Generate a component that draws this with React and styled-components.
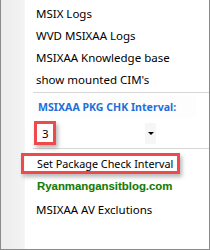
import React from "react";
import styled, { createGlobalStyle } from "styled-components";

const GlobalStyle = createGlobalStyle`
  html, body {
    margin: 0;
    padding: 0;
    background: #ffffff;
  }
`;

const Menu = styled.div`
  position: relative;
  width: 210px;
  height: 250px;
  box-sizing: border-box;
  border: 1px solid #8a8a8a;
  border-top: none;
  padding-top: 2px;
  background: linear-gradient(to right, #ececec 0px, #f3f3f3 23px, #f7f7f7 24px, #ffffff 24px);
  font-family: "Noto Sans", "Open Sans", sans-serif;
  font-size: 11.5px;
  color: #000;
`;

const Item = styled.div`
  height: ${(p) => p.h || 22}px;
  display: flex;
  align-items: center;
  padding-left: ${(p) => p.pl || 35}px;
  white-space: nowrap;
`;

const Separator = styled.div`
  height: 1px;
  margin: ${(p) => p.m || "2px 0 0 32px"};
  background: #d7d7d7;
`;

const Label = styled.div`
  height: 22px;
  margin: 3px 13px 0 32px;
  padding-left: 5px;
  display: flex;
  align-items: center;
  font-weight: 700;
  font-size: 10.6px;
  color: #1f6fd8;
  background: #fdfdfd;
  white-space: nowrap;
`;

const Combo = styled.div`
  height: 24px;
  margin: 3px 0 0 32px;
  display: flex;
  align-items: center;
`;

const Highlight = styled.div`
  box-sizing: border-box;
  border: 3px solid #ee4a4d;
  box-shadow: 2px 3px 4px rgba(0, 0, 0, 0.28);
  display: flex;
  align-items: center;
  white-space: nowrap;
`;

const ValueBox = styled(Highlight)`
  width: 22px;
  height: 24px;
  margin-left: 1px;
  padding-left: 5px;
`;

const ArrowBox = styled.div`
  width: 11px;
  height: 21px;
  margin-left: 89px;
  background: #f6f6f6;
  display: flex;
  align-items: center;
  justify-content: center;
`;

const Arrow = styled.div`
  width: 0;
  height: 0;
  border-left: 3px solid transparent;
  border-right: 3px solid transparent;
  border-top: 3px solid #000;
`;

const ActionBox = styled(Highlight)`
  width: 159px;
  height: 21px;
  margin: 4px 0 0 20px;
  padding-left: 13px;
  font-size: 10.8px;
`;

const Brand = styled(Item)`
  font-family: "Liberation Sans", Arial, sans-serif;
  font-weight: 700;
  font-size: 11.4px;
  color: #0f7a12;
  text-shadow: 0 0 1px rgba(200, 200, 0, 0.35);
  padding-left: 36px;
  height: 23px;
`;

export default function App() {
  return (
    <>
      <GlobalStyle />
      <Menu>
        <Item>MSIX Logs</Item>
        <Item>WVD MSIXAA Logs</Item>
        <Item>MSIXAA Knowledge base</Item>
        <Item>show mounted CIM's</Item>
        <Separator />
        <Label>MSIXAA PKG CHK Interval:</Label>
        <Combo>
          <ValueBox>3</ValueBox>
          <ArrowBox>
            <Arrow />
          </ArrowBox>
        </Combo>
        <Separator m="3px 0 0 32px" />
        <ActionBox>Set Package Check Interval</ActionBox>
        <Brand>Ryanmangansitblog.com</Brand>
        <Item h={24}>MSIXAA AV Exclutions</Item>
      </Menu>
    </>
  );
}
